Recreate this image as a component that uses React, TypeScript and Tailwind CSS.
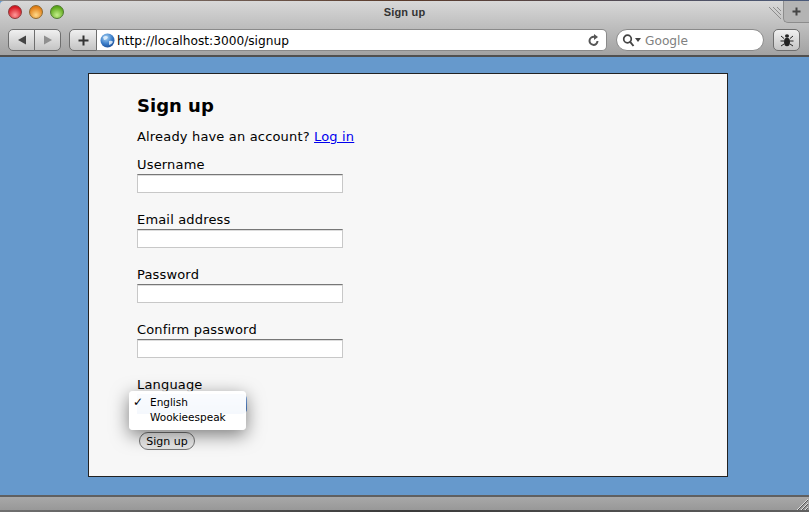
import type { ReactNode } from 'react'

function Light({ from, to, border }: { from: string; to: string; border: string }) {
  return (
    <span
      className="block h-[14px] w-[14px] rounded-full border"
      style={{ background: `radial-gradient(circle at 50% 75%, ${to}, ${from} 75%)`, borderColor: border }}
    />
  )
}

function Field({ label }: { label: string }) {
  return (
    <div className="mb-[17px]">
      <label className="block h-[19px] text-[13px] leading-[20px] tracking-[0.17px] text-black">{label}</label>
      <input
        type="text"
        className="block h-[19px] w-[206px] border border-[#c8c8c8] border-t-[#777] bg-white shadow-[inset_0_1px_0_#dcdcdc]"
      />
    </div>
  )
}

function ToolButton({ children, className }: { children: ReactNode; className: string }) {
  return (
    <div
      className={`flex h-[22px] items-center justify-center border border-[#6e6e6e] bg-gradient-to-b from-[#f0f0f0] to-[#c4c4c4] ${className}`}
    >
      {children}
    </div>
  )
}

export default function App() {
  return (
    <div className="flex h-[512px] w-[809px] flex-col overflow-hidden bg-[#6699cc] font-['DejaVu_Sans',sans-serif]">
      {/* desktop showing above the window */}
      <div className="h-[1px] shrink-0 bg-gradient-to-r from-[#8a8a8a] via-[#5a3a2a] to-[#4a5a7a]" />

      {/* window chrome */}
      <div className="relative h-[56px] shrink-0 rounded-t-[4px] border-b-2 border-[#505050] bg-gradient-to-b from-[#d8d8d8] to-[#a2a2a2]">
        <div className="flex h-[28px] items-start pt-[4px]">
          <div className="flex w-[78px] gap-[7px] pl-[8px]">
            <Light from="#d4131d" to="#ff9a9a" border="#8a3a3a" />
            <Light from="#df7a10" to="#ffd98a" border="#8e6a30" />
            <Light from="#5aa517" to="#c4ef8a" border="#4f7a30" />
          </div>
          <div className="flex-1 pr-[78px] text-center font-['Liberation_Sans',sans-serif] text-[11px] leading-[14px] font-bold tracking-[0.2px] text-[#333]">
            Sign up
          </div>
          {/* resize lines and new tab button */}
          <svg width="14" height="14" viewBox="0 0 14 14" className="absolute top-[5px] right-[27px]">
            <path d="M1 1 L13 13 M5 1 L13 9 M9 1 L13 5" stroke="#8c8c8c" strokeWidth="1" />
          </svg>
          <div className="absolute top-0 right-0 flex h-[22px] w-[26px] items-center justify-center rounded-bl-[5px] border-b border-l border-[#8c8c8c] bg-[#b4b4b4]">
            <svg width="9" height="9" viewBox="0 0 9 9">
              <path d="M4.5 0.5 V8.5 M0.5 4.5 H8.5" stroke="#444" strokeWidth="2" />
            </svg>
          </div>
        </div>
        <div className="flex h-[22px] items-center pl-[8px]">
          <ToolButton className="w-[27px] rounded-l-[5px]">
            <svg width="10" height="10" viewBox="0 0 10 10">
              <path d="M1 5 L9 0.5 V9.5 Z" fill="#444" />
            </svg>
          </ToolButton>
          <ToolButton className="ml-[-1px] w-[27px] rounded-r-[5px]">
            <svg width="10" height="10" viewBox="0 0 10 10">
              <path d="M9 5 L1 0.5 V9.5 Z" fill="#8f8f8f" />
            </svg>
          </ToolButton>
          <ToolButton className="ml-[8px] w-[28px] rounded-l-[5px]">
            <svg width="11" height="11" viewBox="0 0 11 11">
              <path d="M5.5 0.5 V10.5 M0.5 5.5 H10.5" stroke="#333" strokeWidth="2" />
            </svg>
          </ToolButton>
          <div className="flex h-[22px] w-[510px] items-center rounded-r-[5px] border-y border-r border-[#8a8a8a] bg-white">
            <svg width="15" height="15" viewBox="0 0 15 15" className="ml-[3px] shrink-0">
              <defs>
                <radialGradient id="globe" cx="40%" cy="30%" r="75%">
                  <stop offset="0" stopColor="#a8d4f5" />
                  <stop offset="0.6" stopColor="#3a7cc8" />
                  <stop offset="1" stopColor="#1b4d96" />
                </radialGradient>
              </defs>
              <circle cx="7.5" cy="7.5" r="7" fill="url(#globe)" />
              <path d="M3 4 Q6 2 8 4 Q7 7 4 7 Z M9 8 Q12 7 13 9 Q11 12 9 12 Z" fill="#e8f2fb" opacity="0.85" />
            </svg>
            <span className="ml-[2px] flex-1 pt-[2px] text-[12.2px] leading-none text-black">http://localhost:3000/signup</span>
            <svg width="13" height="13" viewBox="0 0 13 13" className="mr-[6px]">
              <path d="M10.5 7 A4 4 0 1 1 7.5 3" fill="none" stroke="#555" strokeWidth="2" />
              <path d="M7 0 L11 3 L7 6 Z" fill="#555" />
            </svg>
          </div>
          <div className="ml-[9px] flex h-[22px] w-[148px] items-center rounded-full border border-[#8a8a8a] bg-white pl-[5px]">
            <svg width="20" height="13" viewBox="0 0 20 13">
              <circle cx="5.5" cy="5" r="3.8" fill="none" stroke="#444" strokeWidth="1.7" />
              <path d="M8.3 8 L11.5 12" stroke="#444" strokeWidth="2" />
              <path d="M13 4 H19 L16 8 Z" fill="#444" />
            </svg>
            <span className="ml-[3px] pt-[2px] text-[12.2px] leading-none text-[#808080]">Google</span>
          </div>
          <ToolButton className="ml-[9px] w-[27px] rounded-[5px]">
            <svg width="14" height="14" viewBox="0 0 14 14">
              <ellipse cx="7" cy="3" rx="2" ry="1.8" fill="#222" />
              <ellipse cx="7" cy="9" rx="3" ry="4.2" fill="#222" />
              <path d="M1 3 L4 5.5 M13 3 L10 5.5 M0.5 8 H4 M13.5 8 H10 M1 13 L4 11 M13 13 L10 11" stroke="#222" strokeWidth="1" />
            </svg>
          </ToolButton>
        </div>
      </div>

      {/* page */}
      <div className="flex-1 pt-[16px] pl-[88px]">
        <div className="h-[404px] w-[640px] border border-[#222] bg-[#f7f7f7] pt-[20px] pl-[48px]">
          <h1 className="h-[24px] text-[18px] leading-[24px] font-bold text-black">Sign up</h1>
          <p className="mt-[9px] mb-[10px] h-[18px] text-[13px] leading-[20px] tracking-[0.17px] text-black">
            Already have an account? <a href="#" className="text-[#0000ee] underline">Log in</a>
          </p>
          <Field label="Username" />
          <Field label="Email address" />
          <Field label="Password" />
          <Field label="Confirm password" />
          <div className="relative">
            <label className="block h-[19px] text-[13px] leading-[20px] tracking-[0.17px] text-black">Language</label>
            <div className="h-[20px] w-[110px] rounded-r-[5px] bg-gradient-to-b from-[#8fb4e8] to-[#3b78d0]" />
            <button className="mt-[18px] ml-[2px] flex h-[18px] w-[56px] items-center justify-center rounded-full border border-[#777] bg-gradient-to-b from-[#fafafa] to-[#e4e4e4] text-[11px] leading-none text-black">
              Sign up
            </button>
            {/* open select menu */}
            <div className="absolute top-[16px] left-[-8px] h-[39px] w-[117px] rounded-[4px] bg-white/95 pt-[4px] text-[10.5px] leading-[15px] text-black shadow-[0_5px_18px_rgba(0,0,0,0.5)]">
              <div className="relative pl-[21px]">
                <span className="absolute left-[4px] text-[12px] font-bold">✓</span>
                English
              </div>
              <div className="pl-[21px]">Wookieespeak</div>
            </div>
          </div>
        </div>
      </div>

      {/* status bar */}
      <div className="relative h-[15px] shrink-0 border-t-2 border-[#606060] bg-gradient-to-b from-[#a8a8a8] to-[#989898]">
        <svg width="12" height="12" viewBox="0 0 12 12" className="absolute right-[1px] bottom-[0px]">
          <path d="M1 12 L12 1 M5 12 L12 5 M9 12 L12 9" stroke="#e0e0e0" strokeWidth="1" />
          <path d="M2 12 L12 2 M6 12 L12 6 M10 12 L12 10" stroke="#555" strokeWidth="1" />
        </svg>
      </div>
      {/* desktop showing below the window */}
      <div className="h-[2px] shrink-0 bg-gradient-to-r from-[#707070] via-[#3a3a3a] to-[#606060]" />
    </div>
  )
}
